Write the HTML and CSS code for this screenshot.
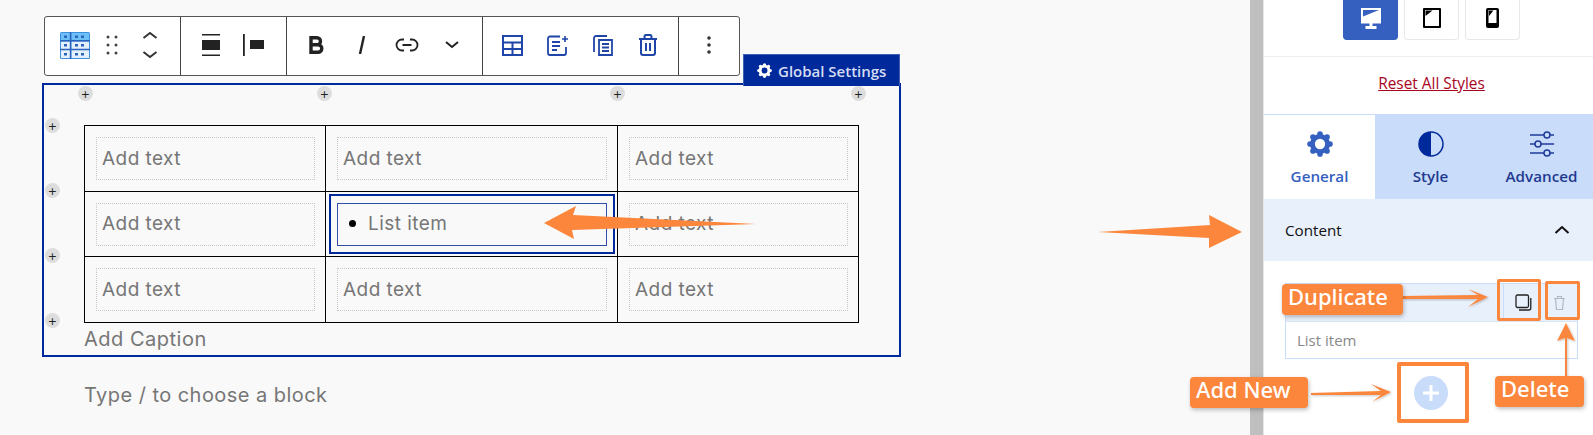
FILE: index.html
```html
<!DOCTYPE html>
<html lang="en">
<head>
<meta charset="utf-8">
<title>Table block list item</title>
<link rel="stylesheet" href="styles.css">
</head>
<body>
<div class="app">
  <main class="canvas">
    <div class="toolbar">
      <div class="tb-group g1">
        <span class="tb-btn"><svg width="30" height="27" viewBox="0 0 30 27"><rect width="30" height="27" rx="1.500" fill="#3f8fe0"/><path d="M1 1h9.500v7.500H1zM11.500 1H29v7.500H11.500z" fill="#6cc0f6"/><path d="M1 9.500h9.500v7.500H1zM11.500 9.500H29V17H11.500zM1 18h9.500v8H1zM11.500 18H29v8H11.500z" fill="#e4f1fc"/><path d="M10.500 0v27M0 8.700h30M0 17.500h30" stroke="#2a64bd" stroke-width="1.400"/><path d="M4 3.500h3v2.500H4zM15 3.500h3v2.500h-3zM21 3.500h3v2.500h-3zM4 12h3v2.500H4zM15 12h3v2.500h-3zM21 12h3v2.500h-3zM4 21h3v2.500H4zM15 21h3v2.500h-3zM21 21h3v2.500h-3z" fill="#2a64bd"/></svg></span>
        <span class="tb-btn"><svg width="12" height="20" viewBox="0 0 12 20" fill="#444"><circle cx="2" cy="2" r="1.500"/><circle cx="10" cy="2" r="1.500"/><circle cx="2" cy="10" r="1.500"/><circle cx="10" cy="10" r="1.500"/><circle cx="2" cy="18" r="1.500"/><circle cx="10" cy="18" r="1.500"/></svg></span>
        <span class="tb-btn"><svg width="16" height="28" viewBox="0 0 16 28" fill="none" stroke="#333" stroke-width="2"><path d="M1.500 7l6.500-5 6.500 5M1.500 21l6.500 5 6.500-5"/></svg></span>
      </div>
      <div class="tb-group g2">
        <span class="tb-btn"><svg width="20" height="22" viewBox="0 0 20 22" fill="#222"><path d="M1 0h18v1.500H1zM1 20.500h18V22H1zM1 6h18v10H1z"/></svg></span>
        <span class="tb-btn"><svg width="21" height="22" viewBox="0 0 21 22" fill="#222"><path d="M0 0h1.800v22H0zM7 6h14v9H7z"/></svg></span>
      </div>
      <div class="tb-group g3">
        <span class="tb-btn"><svg width="15" height="18" viewBox="0 0 15 18" fill="none" stroke="#222" stroke-width="3.400"><path d="M2 1.700h6a3.500 3.500 0 0 1 0 7H2zM2 8.700h7a3.800 3.800 0 0 1 0 7.600H2z"/></svg></span>
        <span class="tb-btn"><svg width="8" height="18" viewBox="0 0 8 18" fill="none" stroke="#222" stroke-width="2.400"><path d="M6 0L2 18"/></svg></span>
        <span class="tb-btn"><svg width="24" height="14" viewBox="0 0 24 14" fill="none" stroke="#222" stroke-width="1.800"><path d="M9 1.500H7a5.500 5.500 0 0 0 0 11h2M15 1.500h2a5.500 5.500 0 0 1 0 11h-2M7.500 7h9"/></svg></span>
        <span class="tb-btn"><svg width="14" height="8" viewBox="0 0 14 8" fill="none" stroke="#222" stroke-width="2"><path d="M1 1l6 5 6-5"/></svg></span>
      </div>
      <div class="tb-group g3">
        <span class="tb-btn"><svg width="21" height="21" viewBox="0 0 21 21" fill="none" stroke="#1f45a8" stroke-width="2"><path d="M1 1h19v19H1zM1 7.500h19M1 14h19M10.500 7.500V20"/></svg></span>
        <span class="tb-btn"><svg width="21" height="21" viewBox="0 0 21 21" fill="none" stroke="#1f45a8" stroke-width="1.800"><path d="M13 1.500H3a2 2 0 0 0-2 2V18a2 2 0 0 0 2 2h14a2 2 0 0 0 2-2v-6"/><path d="M5 7h8M5 11h8M5 15h5"/><path d="M18 1v6M15 4h6" stroke-width="1.600"/></svg></span>
        <span class="tb-btn"><svg width="20" height="21" viewBox="0 0 20 21" fill="none" stroke="#1f45a8" stroke-width="1.800"><path d="M14 1H3a2 2 0 0 0-2 2v14"/><path d="M6 5h13v15H6z"/><path d="M9 9h7M9 12.500h7M9 16h7"/></svg></span>
        <span class="tb-btn"><svg width="20" height="22" viewBox="0 0 20 22" fill="none" stroke="#1f45a8" stroke-width="2"><path d="M1 5h18M6.500 5V2.500A1.500 1.500 0 0 1 8 1h4a1.500 1.500 0 0 1 1.500 1.500V5M3 5v14a2 2 0 0 0 2 2h10a2 2 0 0 0 2-2V5M8 9v8M12 9v8"/></svg></span>
      </div>
      <div class="tb-group g5">
        <svg width="4" height="18" viewBox="0 0 4 18" fill="#333"><circle cx="2" cy="2" r="1.800"/><circle cx="2" cy="9" r="1.800"/><circle cx="2" cy="16" r="1.800"/></svg>
      </div>
    </div>

    <section class="block">
      <div class="global-badge">
        <svg class="gear-badge" width="15" height="15" viewBox="0 0 24 24"><use href="#gear"/></svg>
        <span>Global Settings</span>
      </div>
      <span class="adder a-t1">+</span><span class="adder a-t2">+</span><span class="adder a-t3">+</span><span class="adder a-t4">+</span>
      <span class="adder a-l1">+</span><span class="adder a-l2">+</span><span class="adder a-l3">+</span><span class="adder a-l4">+</span>
      <table class="grid">
        <colgroup><col class="c1"><col class="c2"><col class="c3"></colgroup>
        <tr class="r1"><td><div class="cell">Add text</div></td><td><div class="cell">Add text</div></td><td><div class="cell">Add text</div></td></tr>
        <tr class="r2"><td><div class="cell">Add text</div></td><td class="sel"><div class="cell active"><ul class="bullets"><li>List item</li></ul></div></td><td><div class="cell">Add text</div></td></tr>
        <tr class="r3"><td><div class="cell">Add text</div></td><td><div class="cell">Add text</div></td><td><div class="cell">Add text</div></td></tr>
      </table>
      <p class="caption">Add Caption</p>
    </section>
    <p class="appender">Type / to choose a block</p>
  </main>

  <div class="gutter"></div>

  <aside class="sidebar">
    <div class="devices">
      <span class="dev on"><svg width="20" height="21" viewBox="0 0 20 21"><path d="M0 0h20v15.500H0z" fill="#fff"/><path d="M2 2h16l-16 6.500z" fill="#3560c0"/><path d="M8.500 15h3v3.500h-3zM4.500 18h11v3h-11z" fill="#fff"/></svg></span>
      <span class="dev"><svg width="18" height="20" viewBox="0 0 18 20"><rect width="18" height="20" rx="1" fill="#000"/><path d="M2 2h14v16H2z" fill="#fff"/><path d="M2.500 2.500h7L2.500 8z" fill="#000"/></svg></span>
      <span class="dev"><svg width="13" height="20" viewBox="0 0 13 20"><rect width="13" height="20" rx="2" fill="#000"/><path d="M2.500 2h8v13h-8z" fill="#fff"/><path d="M3 2.500h4.500L3 8z" fill="#000"/></svg></span>
    </div>
    <div class="reset"><a href="#">Reset All Styles</a></div>
    <div class="tabs">
      <div class="tab current">
        <svg class="tab-icon" width="26" height="26" viewBox="0 0 24 24"><use href="#gear"/></svg>
        <span>General</span>
      </div>
      <div class="tab">
        <svg class="tab-icon" width="26" height="26" viewBox="0 0 26 26"><circle cx="13" cy="13" r="12" fill="none" stroke="#00299c" stroke-width="1.500"/><path d="M13 1a12 12 0 0 0 0 24z" fill="#00299c"/></svg>
        <span>Style</span>
      </div>
      <div class="tab">
        <svg class="tab-icon" width="26" height="26" viewBox="0 0 26 26" fill="none" stroke="#1f3a9c" stroke-width="1.500"><path d="M1 4h14M21 4h4M1 13h5M12 13h13M1 22h14M21 22h4"/><circle cx="18" cy="4" r="3"/><circle cx="9" cy="13" r="3"/><circle cx="18" cy="22" r="3"/></svg>
        <span>Advanced</span>
      </div>
    </div>
    <div class="panel-head">
      <span>Content</span>
      <svg width="16" height="10" viewBox="0 0 16 10" fill="none" stroke="#111" stroke-width="2"><path d="M1.500 8l6.500-6 6.500 6"/></svg>
    </div>
    <div class="repeater">
      <div class="rep-head">
        <span class="rep-btn"><svg width="17" height="17" viewBox="0 0 17 17" fill="none" stroke="#222" stroke-width="1.300"><rect x="1" y="1" width="12.500" height="12.500" rx="1.500"/><path d="M15.800 4v10a2 2 0 0 1-2 2H4"/></svg></span>
        <span class="rep-btn last"><svg width="13" height="15" viewBox="0 0 13 15" fill="none" stroke="#b3b9c2" stroke-width="1.200"><path d="M1 3.500h11M4.500 3.500V1.500h4v2M2.500 3.500l1 11h6l1-11"/></svg></span>
      </div>
      <div class="rep-body">List item</div>
    </div>
    <div class="rep-add"><span class="add-circle"><svg width="18" height="18" viewBox="0 0 18 18" fill="none" stroke="#fff" stroke-width="3"><path d="M9 1v16M1 9h16"/></svg></span></div>
  </aside>
</div>

<svg class="defs" width="0" height="0"><defs><symbol id="gear" viewBox="0 0 24 24"><g fill="currentColor"><circle cx="12" cy="2.800" r="2.600"/><circle cx="12" cy="21.200" r="2.600"/><circle cx="2.800" cy="12" r="2.600"/><circle cx="21.200" cy="12" r="2.600"/><circle cx="5.500" cy="5.500" r="2.600"/><circle cx="18.500" cy="5.500" r="2.600"/><circle cx="5.500" cy="18.500" r="2.600"/><circle cx="18.500" cy="18.500" r="2.600"/></g><circle cx="12" cy="12" r="7" fill="none" stroke="currentColor" stroke-width="4.500"/></symbol></defs></svg>

<div class="notes">
  <svg class="arrows" width="1593" height="435" viewBox="0 0 1593 435">
    <defs><filter id="sh" x="-10%" y="-30%" width="120%" height="160%"><feDropShadow dx="1" dy="1" stdDeviation="1.200" flood-color="#000" flood-opacity=".22"/></filter></defs>
    <path class="arr" d="M544 223L576 206L573 215L756 224L572 230L574 239Z"/>
    <path class="arr" d="M1098 232L1210 225L1209 215L1242 232L1209 248L1209 238Z"/>
    <path class="arr" filter="url(#sh)" d="M1403 296L1478 295L1468 289L1488 297L1468 307L1478 299L1403 299Z"/>
    <path class="arr" filter="url(#sh)" d="M1311 393L1381 391L1371 384L1391 392L1372 402L1381 395L1311 395Z"/>
    <path class="arr" filter="url(#sh)" d="M1565 376L1565 338L1557 341L1566 323L1575 341L1567 338L1567 376Z"/>
  </svg>
  <span class="hl hl-dup"></span>
  <span class="hl hl-del"></span>
  <span class="hl hl-add"></span>
  <span class="tag tag-dup">Duplicate</span>
  <span class="tag tag-add">Add New</span>
  <span class="tag tag-del">Delete</span>
</div>
</body>
</html>
```

FILE: styles.css
```css
* { box-sizing: border-box; }
html, body { margin: 0; height: 435px; overflow: hidden; background: #f9f9f9; }
body { font-family: "Open Sans", "Noto Sans", sans-serif; position: relative; }

.app { display: flex; width: 1593px; height: 435px; }
.defs { position: absolute; }

/* canvas */
.canvas { width: 1250px; flex: none; padding: 16px 0 0 42px; background: #f9f9f9; font-family: Inter, sans-serif; }

.toolbar { display: flex; width: 696px; height: 60px; margin-left: 2px; background: #fff; border: 1px solid #555; border-radius: 3px; }
.tb-group { display: flex; align-items: center; height: 100%; padding-bottom: 2px; border-right: 1px solid #444; }
.tb-group:last-child { border-right: 0; }
.tb-btn { display: flex; align-items: center; justify-content: center; height: 100%; }
.g1 { width: 136px; padding-left: 11px; }
.g1 .tb-btn { width: 37.500px; }
.g2 { width: 106px; padding-left: 9px; }
.g2 .tb-btn { width: 42px; }
.g3 { width: 196px; padding-left: 7px; }
.g3 .tb-btn { width: 45px; }
.g5 { flex: 1; padding-left: 28px; }

.block { position: relative; width: 859px; height: 274px; margin-top: 7px; padding: 40px 0 0 40px; border: 2px solid #00299c; }
.global-badge { position: absolute; right: -1px; top: -31px; display: flex; align-items: center; gap: 6px; width: 157px; height: 32px; padding-left: 13px; background: #00299c; color: #fff; font: 600 15px "Open Sans", sans-serif; border: 1px solid #3f5fb5; border-bottom: 0; }
.global-badge span { color: #d5ddf2; }

.adder { position: absolute; display: flex; align-items: center; justify-content: center; width: 15px; height: 15px; border-radius: 50%; background: #ddd; color: #222; font: 300 15px/1 Inter, sans-serif; }
.a-t1, .a-t2, .a-t3, .a-t4 { top: 1px; }
.a-t1 { left: 34px; } .a-t2 { left: 273px; } .a-t3 { left: 566px; } .a-t4 { left: 807px; }
.a-l1, .a-l2, .a-l3, .a-l4 { left: 1px; }
.a-l1 { top: 33px; } .a-l2 { top: 98px; } .a-l3 { top: 163px; } .a-l4 { top: 228px; }

.grid { width: 774px; table-layout: fixed; border-collapse: collapse; }
.grid td { padding: 0 10px 0 11px; border: 1px solid #000; vertical-align: middle; }
.c1 { width: 241px; } .c2 { width: 292px; } .c3 { width: 241px; }
.r1, .r3 { height: 66px; }
.r2 { height: 65px; }
.r2 .cell { padding-bottom: 2px; }
.cell { display: flex; align-items: center; height: 43px; padding-left: 5px; border: 1px dotted #c8c8c8; color: #767676; font-size: 19px; letter-spacing: .45px; }
.grid td.sel { position: relative; }
.grid td.sel::before { content: ""; position: absolute; inset: 2px 2px 2px 3px; border: 2px solid #00299c; }
.cell.active { border: 1px solid #2f4fa8; }
.bullets { margin: 0; padding: 0 0 0 6px; list-style: none; }
.bullets li { display: flex; align-items: center; gap: 12px; }
.bullets li::before { content: ""; width: 7px; height: 7px; border-radius: 50%; background: #000; }

.caption { margin: 4px 0 0; color: #767676; font-size: 20px; line-height: 24px; letter-spacing: .5px; }
.appender { margin: 26px 0 0 42px; color: #767676; font-size: 20px; line-height: 24px; letter-spacing: .45px; }

/* gutter and sidebar */
.gutter { width: 14px; flex: none; background: #bfbfbf; border-right: 1px solid #e6e6e6; }
.sidebar { flex: 1; background: #fff; overflow: hidden; }

.devices { display: flex; gap: 6px; justify-content: flex-start; height: 57px; padding-left: 79px; border-bottom: 1px solid #eee; }
.dev { display: flex; align-items: flex-start; justify-content: center; width: 55px; height: 40px; padding-top: 8px; background: #fff; border: 1px solid #e8e8e8; border-top: 0; border-radius: 0 0 4px 4px; }
.dev.on { background: #3560c0; border-color: #3560c0; }

.reset { display: flex; align-items: center; justify-content: center; height: 57px; padding: 0 0 4px 6px; font-size: 15.400px; }
.reset a { color: #a8051e; }

.tabs { display: grid; grid-template-columns: repeat(3, 111px); height: 85px; background: #c9dcf9; border-top: 1px solid #c9dcf9; }
.tab { display: flex; flex-direction: column; align-items: center; padding-top: 16px; gap: 9px; color: #1f3a8f; font-size: 15.200px; font-weight: 600; line-height: 20px; }
.tab.current { background: #fff; color: #3560c0; }
.tab-icon { flex: none; }

.panel-head { display: flex; align-items: center; justify-content: space-between; height: 62px; padding: 0 23px 0 21px; background: #e8f0fb; color: #111; font-size: 15.200px; font-weight: 500; }

.repeater { margin: 22px 15px 0 21px; border: 1px solid #c9dcf9; }
.rep-head { display: flex; justify-content: flex-end; height: 38px; background: #e8f0fb; border-bottom: 1px solid #d9e4f4; }
.rep-btn { display: flex; align-items: center; justify-content: center; width: 39px; border-left: 1px solid #c9dcf9; }
.rep-btn.last { width: 35px; border-left: 0; }
.rep-body { display: flex; align-items: center; height: 36px; padding-left: 11px; color: #888; font-size: 15px; }

.rep-add { display: flex; justify-content: center; margin: 17px 0 0 4px; }
.add-circle { display: flex; align-items: center; justify-content: center; width: 34px; height: 34px; border-radius: 50%; background: #c9dcf9; }

/* annotation layer */
.notes { position: absolute; left: 0; top: 0; width: 1593px; height: 435px; pointer-events: none; }
.arrows { position: absolute; left: 0; top: 0; }
.arr { fill: #fb863c; }
.hl { position: absolute; border: 3px solid #fb863c; border-radius: 2px; }
.hl-dup { left: 1497px; top: 279px; width: 44px; height: 42px; }
.hl-del { left: 1545px; top: 281px; width: 35px; height: 39px; }
.hl-add { left: 1397px; top: 362px; width: 72px; height: 61px; border-width: 4px; }
.tag { position: absolute; display: flex; align-items: center; height: 31px; padding: 0 0 7px 6px; background: #fb863c; color: #fff; font: 500 22px "Noto Sans", sans-serif; border-radius: 4px; box-shadow: 1px 2px 4px rgba(0,0,0,.25); }
.tag-dup { left: 1282px; top: 284px; width: 121px; }
.tag-add { left: 1190px; top: 377px; width: 118px; }
.tag-del { left: 1495px; top: 376px; width: 89px; }
```
